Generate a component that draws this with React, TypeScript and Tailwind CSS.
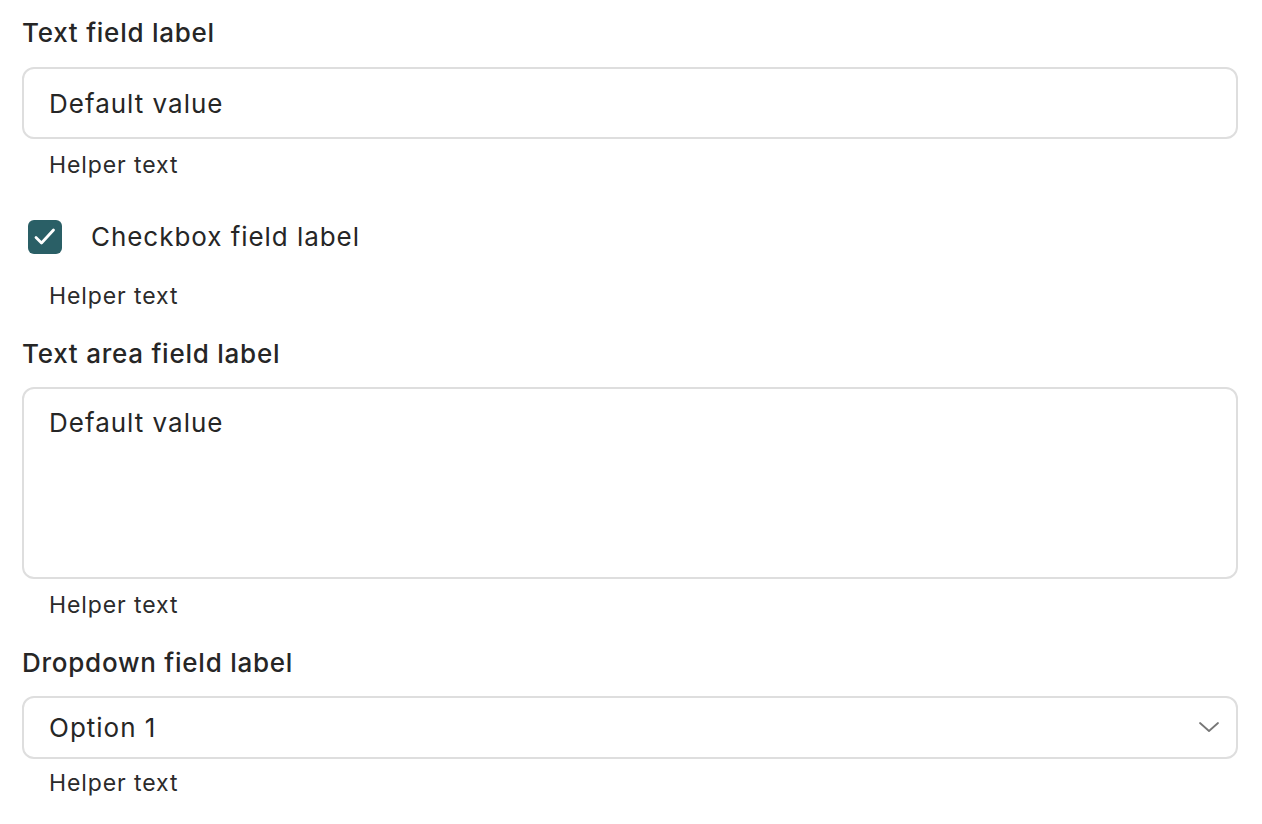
import { useState } from 'react'

const font = { fontFamily: 'Inter, "Noto Sans", sans-serif' }

function Helper({ children }: { children: React.ReactNode }) {
  return <p className="pl-[27px] text-[23px] leading-[30px] tracking-[0.9px] text-[#2b2b2b]">{children}</p>
}

export default function App() {
  const [checked, setChecked] = useState(true)
  const [texto, setTexto] = useState('Default value')
  const [area, setArea] = useState('Default value')

  return (
    <div className="min-h-screen bg-white pl-[22px] pr-[24px] pt-[17px] text-[#262626]" style={font}>
      <label className="block text-[26px] leading-[32px] font-medium tracking-[0.75px]">Text field label</label>
      <input
        className="mt-[18px] block h-[72px] w-full rounded-[12px] border-2 border-[#dedede] bg-white pl-[25px] text-[26px] tracking-[1px] text-[#262626] outline-none"
        value={texto}
        onChange={(e) => setTexto(e.target.value)}
      />
      <div className="mt-[11px]">
        <Helper>Helper text</Helper>
      </div>

      <div className="mt-[40px] flex items-center h-[34px]">
        <button
          onClick={() => setChecked(!checked)}
          className={`ml-[6px] flex h-[34px] w-[34px] items-center justify-center rounded-[6px] ${checked ? 'bg-[#2a5f66]' : 'border-2 border-[#bbb] bg-white'}`}
        >
          {checked && (
            <svg width="34" height="34" viewBox="0 0 34 34" fill="none">
              <path d="M8 17.5l5.5 5.5 12-13" stroke="white" strokeWidth="2.8" strokeLinecap="round" strokeLinejoin="round" />
            </svg>
          )}
        </button>
        <span className="ml-[29px] text-[26px] leading-[32px] tracking-[0.95px]">Checkbox field label</span>
      </div>
      <div className="mt-[27px]">
        <Helper>Helper text</Helper>
      </div>

      <label className="mt-[27px] block text-[26px] leading-[32px] font-medium tracking-[0.75px]">Text area field label</label>
      <textarea
        className="mt-[17px] block h-[192px] w-full resize-none rounded-[12px] border-2 border-[#dedede] bg-white pl-[25px] pt-[18px] text-[26px] leading-[32px] tracking-[1px] text-[#262626] outline-none"
        value={area}
        onChange={(e) => setArea(e.target.value)}
      />
      <div className="mt-[11px]">
        <Helper>Helper text</Helper>
      </div>

      <label className="mt-[27px] block text-[26px] leading-[32px] font-medium tracking-[0.75px]">Dropdown field label</label>
      <div className="relative mt-[17px]">
        <select className="block h-[63px] w-full appearance-none rounded-[12px] border-2 border-[#dedede] bg-white pl-[25px] text-[26px] tracking-[1px] text-[#262626] outline-none">
          <option>Option 1</option>
          <option>Option 2</option>
          <option>Option 3</option>
        </select>
        <svg className="pointer-events-none absolute right-[18px] top-[24px]" width="22" height="14" viewBox="0 0 22 14" fill="none">
          <path d="M2 3l9 8 9-8" stroke="#777" strokeWidth="1.8" strokeLinecap="round" strokeLinejoin="round" />
        </svg>
      </div>
      <div className="mt-[9px]">
        <Helper>Helper text</Helper>
      </div>
    </div>
  )
}
